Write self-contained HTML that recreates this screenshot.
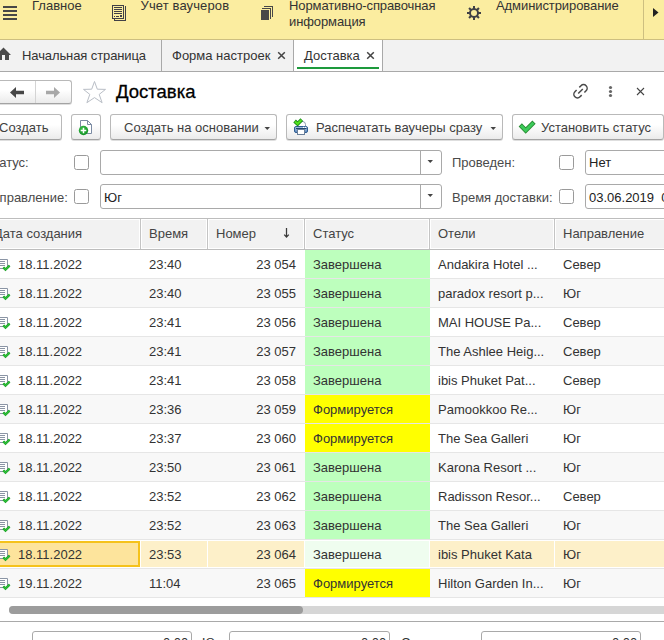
<!DOCTYPE html>
<html><head><meta charset="utf-8">
<style>
*{box-sizing:border-box;margin:0;padding:0}
html,body{width:664px;height:640px;overflow:hidden;background:#fff;font-family:"Liberation Sans",sans-serif;font-size:13px;color:#333}
.a{position:absolute;white-space:nowrap;line-height:16px}
svg{position:absolute;overflow:visible}
#top{position:absolute;left:0;top:0;width:664px;height:40px;background:#fbeda0;border-bottom:1px solid #cdbf80}
#tabs{position:absolute;left:0;top:40px;width:664px;height:32px;background:#f2f2f2;border-bottom:1px solid #a9a9a9}
.btn{position:absolute;top:114px;height:26px;border:1px solid #b9b9b9;border-bottom-color:#a3a3a3;border-radius:3px;background:linear-gradient(#fff 0%,#fff 40%,#ebebeb 100%);box-shadow:0 1px 0 rgba(0,0,0,0.13)}
.bt{position:absolute;white-space:nowrap;line-height:16px;top:120px;color:#404040}
.inp{position:absolute;height:25px;border:1px solid #a9a9a9;border-radius:3px;background:#fff}
.chk{position:absolute;width:15px;height:15px;border:1px solid #9a9a9a;border-radius:2.5px;background:#fff}
.lb{position:absolute;white-space:nowrap;line-height:16px;color:#4a4a4a}
#thead{position:absolute;left:0;top:218px;width:664px;height:32px;background:#c4c4c4;border-top:1px solid #bdbdbd;border-bottom:1px solid #bdbdbd}
.th{position:absolute;top:0;height:30px;border:1px solid #fff;background:#f2f2f2}
#thead .a{color:#444}
.row{position:absolute;left:0;width:664px;height:29px;border-bottom:1px solid #e6e6e6}
.c{position:absolute;top:7px;line-height:16px;white-space:nowrap;color:#333}
</style></head><body>

<div id="top">
  <svg style="left:0;top:0" width="664" height="40">
    <g fill="#474747"><rect x="3" y="6" width="14" height="2"/><rect x="3" y="10" width="14" height="2"/><rect x="3" y="14" width="14" height="2"/><rect x="3" y="18" width="14" height="2"/></g>
    <g fill="#404046">
      <path d="M112 5h12v14h-12zM113 6v12h10v-12z" fill-rule="evenodd"/>
      <path d="M124 6h2v15h-12v-2h1v1h10v-14h-1z"/>
      <rect x="114" y="7" width="8" height="1"/><rect x="114" y="9" width="8" height="1"/><rect x="114" y="11" width="8" height="1"/><rect x="114" y="13" width="8" height="1"/>
      <rect x="114" y="16" width="1" height="1"/><rect x="116" y="16" width="3" height="1"/><rect x="120" y="15" width="2" height="2"/>
    </g>
    <g fill="#474747">
      <rect x="261" y="10" width="8" height="10"/>
      <path d="M262 8h9v11h-1v-10h-8z"/>
      <path d="M264 6h9v11h-1v-10h-8z"/>
    </g>
    <g fill="#404046">
      <path d="M474 8a5 5 0 1 0 0.001 0zM474 10a3 3 0 1 1 -0.001 0z" fill-rule="evenodd"/>
      <rect x="473" y="6" width="2" height="14"/><rect x="467" y="12" width="14" height="2"/>
      <rect x="473" y="6" width="2" height="14" transform="rotate(45 474 13)"/><rect x="473" y="6" width="2" height="14" transform="rotate(-45 474 13)"/>
      <circle cx="474" cy="13" r="3" fill="#fbeda0"/>
    </g>
    <path d="M653 8L658.5 12.5L653 17Z" fill="#222"/>
  </svg>
  <div class="a" style="left:32px;top:-2px">Главное</div>
  <div class="a" style="left:140.5px;top:-2px;letter-spacing:0.12px">Учет ваучеров</div>
  <div class="a" style="left:289px;top:-2px;line-height:15.5px;letter-spacing:-0.1px">Нормативно-справочная<br>информация</div>
  <div class="a" style="left:496px;top:-2px;letter-spacing:-0.08px">Администрирование</div>
  <div style="position:absolute;left:643px;top:0;width:1px;height:39px;background:#cdbf80"></div>
</div>

<div id="tabs">
  <div style="position:absolute;left:161px;top:0;width:1px;height:31px;background:#a9a9a9"></div>
  <div style="position:absolute;left:293px;top:0;width:90px;height:31px;background:#fff;border-left:1px solid #a9a9a9;border-right:1px solid #a9a9a9"></div>
  <div style="position:absolute;left:297px;top:27px;width:82px;height:2px;background:#1d9a3c"></div>
  <svg style="left:0;top:0" width="664" height="32">
    <path d="M3.5 7.5L11 15H9V20H5V15H2V20H-4V15Z" fill="#4a4a4a"/>
    <path d="M278.2 12.2l6.6 6.6M284.8 12.2l-6.6 6.6" stroke="#444" stroke-width="1.5"/>
    <path d="M367.2 12.2l6.6 6.6M373.8 12.2l-6.6 6.6" stroke="#444" stroke-width="1.5"/>
  </svg>
  <div class="a" style="left:22px;top:8px;letter-spacing:-0.1px">Начальная страница</div>
  <div class="a" style="left:172px;top:8px">Форма настроек</div>
  <div class="a" style="left:304px;top:8px">Доставка</div>
</div>

<div class="btn" style="left:-10px;top:80px;width:82px;height:24px"></div>
<div style="position:absolute;left:35px;top:81px;width:1px;height:22px;background:#d4d4d4"></div>
<svg style="left:0;top:0" width="664" height="640">
  <path d="M10 92.5L16 87V90.8H24V94.2H16V98Z" fill="#474747"/>
  <path d="M60 92.5L54 87V90.8H46V94.2H54V98Z" fill="#a8a8a8"/>
  <path d="M94.5 81.5L97.3 89.2L105.5 89.4L99.2 94.4L102.1 102.7L94.5 97.6L86.9 102.7L89.8 94.4L83.5 89.4L91.7 89.2Z" fill="none" stroke="#b9bec6" stroke-width="1"/>
  <g transform="translate(580.5 91.25) rotate(-45)" fill="none" stroke="#4a4a4a" stroke-width="1.5">
    <path d="M1.9 -3.6H4.3A3.6 3.6 0 0 1 4.3 3.6H1.9"/>
    <path d="M-1.9 3.6H-4.3A3.6 3.6 0 0 1 -4.3 -3.6H-1.9"/>
    <path d="M-3.2 0H3.2"/>
  </g>
  <g fill="#666"><circle cx="610.5" cy="87.5" r="1.6"/><circle cx="610.5" cy="91.5" r="1.6"/><circle cx="610.5" cy="95.5" r="1.6"/></g>
  <path d="M637 88l7 7M644 88l-7 7" stroke="#444" stroke-width="1.1"/>
</svg>
<div class="a" style="left:116px;top:81px;font-size:18.5px;line-height:22px;color:#000;-webkit-text-stroke:0.3px #000">Доставка</div>

<div class="btn" style="left:-10px;width:72px"></div>
<div class="bt" style="left:-1px">Создать</div>
<div class="btn" style="left:71px;width:30px"></div>
<div class="btn" style="left:110px;width:167px"></div>
<div class="bt" style="left:124px">Создать на основании</div>
<div class="btn" style="left:286px;width:217px"></div>
<div class="bt" style="left:316px">Распечатать ваучеры сразу</div>
<div class="btn" style="left:512px;width:152px"></div>
<div class="bt" style="left:541px">Установить статус</div>
<svg style="left:0;top:0" width="664" height="640">
  <defs><linearGradient id="pg" x1="0" y1="0" x2="0" y2="1"><stop offset="0" stop-color="#a9c4e4"/><stop offset="1" stop-color="#5d88bb"/></linearGradient>
  <radialGradient id="gg" cx="0.4" cy="0.35" r="0.7"><stop offset="0" stop-color="#3cc04a"/><stop offset="1" stop-color="#0f8f22"/></radialGradient></defs>
  <path d="M264.5 127H270L267.25 130Z" fill="#444"/>
  <path d="M490.5 127H496L493.25 130Z" fill="#444"/>
  <!-- doc add icon -->
  <path d="M80.5 120.5H87.5L91.5 124.5V133.5H80.5Z" fill="#fff" stroke="#7b8ba3" stroke-width="1"/>
  <path d="M87.5 120.5V124.5H91.5" fill="none" stroke="#7b8ba3" stroke-width="1"/>
  <circle cx="83.5" cy="130.5" r="4.7" fill="url(#gg)"/>
  <path d="M83.5 127.7V133.3M80.7 130.5H86.3" stroke="#fff" stroke-width="1.5"/>
  <!-- printer icon -->
  <path d="M299.5 121.5H303Q305.5 122 305.5 124.5V127" fill="#fff" stroke="#8a98ad" stroke-width="1"/>
  <rect x="294.5" y="126.5" width="13" height="6" rx="1.5" fill="url(#pg)" stroke="#2f5e93" stroke-width="1"/>
  <path d="M296 128.5H306.5" stroke="#23466f" stroke-width="1"/>
  <rect x="303" y="126.8" width="1.2" height="1.2" fill="#fff"/><rect x="305" y="126.8" width="1.2" height="1.2" fill="#fff"/>
  <rect x="297.5" y="129.5" width="7" height="5" fill="#fff" stroke="#6b7f99" stroke-width="1"/>
  <path d="M294.6 121L297.6 123.8L301.8 119.6" fill="none" stroke="#1c8a1c" stroke-width="3.8"/>
  <path d="M295 121.4L297.6 123.8L301.4 120" fill="none" stroke="#52e21e" stroke-width="2"/>
  <!-- check icon -->
  <path d="M521.9 126.6L525.7 130.4L532.4 123.7" fill="none" stroke="#2a8c33" stroke-width="4.6" stroke-linecap="square"/>
  <path d="M521.9 126.6L525.7 130.4L532.4 123.7" fill="none" stroke="#3ccb5a" stroke-width="2.8" stroke-linecap="square"/>
</svg>

<div class="lb" style="left:-16px;top:155px">Статус:</div>
<div class="chk" style="left:74px;top:155px"></div>
<div class="inp" style="left:100px;top:150px;width:342px"></div>
<div style="position:absolute;left:420px;top:151px;width:1px;height:23px;background:#a9a9a9"></div>
<div class="lb" style="left:452px;top:155px">Проведен:</div>
<div class="chk" style="left:559px;top:155px"></div>
<div class="inp" style="left:585px;top:150px;width:100px"></div>
<div class="a" style="left:589px;top:155px;color:#222">Нет</div>

<div class="lb" style="left:-17px;top:190px">Направление:</div>
<div class="chk" style="left:74px;top:189px"></div>
<div class="inp" style="left:100px;top:184px;width:342px"></div>
<div style="position:absolute;left:420px;top:185px;width:1px;height:23px;background:#a9a9a9"></div>
<div class="a" style="left:104px;top:190px;color:#222">Юг</div>
<div class="lb" style="left:452px;top:190px">Время доставки:</div>
<div class="chk" style="left:559px;top:189px"></div>
<div class="inp" style="left:585px;top:184px;width:100px"></div>
<div class="a" style="left:589px;top:190px;color:#222">03.06.2019&nbsp; 00:00:00</div>
<svg style="left:0;top:0" width="664" height="640">
  <path d="M427.5 160H433L430.25 163Z" fill="#444"/>
  <path d="M427.5 194H433L430.25 197Z" fill="#444"/>
</svg>

<div id="thead">
<div class="th" style="left:-20px;width:160px"></div>
<div class="th" style="left:141px;width:66px"></div>
<div class="th" style="left:208px;width:96px"></div>
<div class="th" style="left:305px;width:124px"></div>
<div class="th" style="left:430px;width:124px"></div>
<div class="th" style="left:555px;width:145px"></div>
<div class="a" style="left:-6px;top:7px">Дата создания</div>
<div class="a" style="left:149px;top:7px">Время</div>
<div class="a" style="left:216px;top:7px">Номер</div>
<div class="a" style="left:313px;top:7px">Статус</div>
<div class="a" style="left:438px;top:7px">Отели</div>
<div class="a" style="left:563px;top:7px">Направление</div>
<svg style="left:0;top:0" width="664" height="32"><path d="M286.5 9V18.2M284.2 15.6L286.5 18L288.8 15.6" fill="none" stroke="#3a3a3a" stroke-width="1.25"/></svg>
</div>
<div class="row" style="top:250px;background:#fff">
<div style="position:absolute;left:305px;top:0;width:125px;height:28px;background:#bdffbd"></div>
<svg style="left:0;top:9px" width="12" height="14"><path d="M-4 0.5H7.5V9.5H-4Z" fill="#fff" stroke="#8b95a5" stroke-width="1"/><path d="M-3 2.5H5M-3 4.5H5M-3 6.5H5" stroke="#8b95a5" stroke-width="1"/><path d="M3.3 8.3L5.5 10.6L9.6 6.6" fill="none" stroke="#1c9a26" stroke-width="2.4"/><path d="M3.3 8.3L5.5 10.6L9.6 6.6" fill="none" stroke="#2fc43a" stroke-width="1.2"/></svg>
<div class="c" style="left:18px">18.11.2022</div>
<div class="c" style="left:149px">23:40</div>
<div class="c" style="right:368px">23 054</div>
<div class="c" style="left:313px">Завершена</div>
<div class="c" style="left:438px">Andakira Hotel ...</div>
<div class="c" style="left:563px">Север</div>
</div>
<div class="row" style="top:279px;background:#f8f8f8">
<div style="position:absolute;left:305px;top:0;width:125px;height:28px;background:#bdffbd"></div>
<svg style="left:0;top:9px" width="12" height="14"><path d="M-4 0.5H7.5V9.5H-4Z" fill="#fff" stroke="#8b95a5" stroke-width="1"/><path d="M-3 2.5H5M-3 4.5H5M-3 6.5H5" stroke="#8b95a5" stroke-width="1"/><path d="M3.3 8.3L5.5 10.6L9.6 6.6" fill="none" stroke="#1c9a26" stroke-width="2.4"/><path d="M3.3 8.3L5.5 10.6L9.6 6.6" fill="none" stroke="#2fc43a" stroke-width="1.2"/></svg>
<div class="c" style="left:18px">18.11.2022</div>
<div class="c" style="left:149px">23:40</div>
<div class="c" style="right:368px">23 055</div>
<div class="c" style="left:313px">Завершена</div>
<div class="c" style="left:438px">paradox resort p...</div>
<div class="c" style="left:563px">Юг</div>
</div>
<div class="row" style="top:308px;background:#fff">
<div style="position:absolute;left:305px;top:0;width:125px;height:28px;background:#bdffbd"></div>
<svg style="left:0;top:9px" width="12" height="14"><path d="M-4 0.5H7.5V9.5H-4Z" fill="#fff" stroke="#8b95a5" stroke-width="1"/><path d="M-3 2.5H5M-3 4.5H5M-3 6.5H5" stroke="#8b95a5" stroke-width="1"/><path d="M3.3 8.3L5.5 10.6L9.6 6.6" fill="none" stroke="#1c9a26" stroke-width="2.4"/><path d="M3.3 8.3L5.5 10.6L9.6 6.6" fill="none" stroke="#2fc43a" stroke-width="1.2"/></svg>
<div class="c" style="left:18px">18.11.2022</div>
<div class="c" style="left:149px">23:41</div>
<div class="c" style="right:368px">23 056</div>
<div class="c" style="left:313px">Завершена</div>
<div class="c" style="left:438px">MAI HOUSE Pa...</div>
<div class="c" style="left:563px">Север</div>
</div>
<div class="row" style="top:337px;background:#f8f8f8">
<div style="position:absolute;left:305px;top:0;width:125px;height:28px;background:#bdffbd"></div>
<svg style="left:0;top:9px" width="12" height="14"><path d="M-4 0.5H7.5V9.5H-4Z" fill="#fff" stroke="#8b95a5" stroke-width="1"/><path d="M-3 2.5H5M-3 4.5H5M-3 6.5H5" stroke="#8b95a5" stroke-width="1"/><path d="M3.3 8.3L5.5 10.6L9.6 6.6" fill="none" stroke="#1c9a26" stroke-width="2.4"/><path d="M3.3 8.3L5.5 10.6L9.6 6.6" fill="none" stroke="#2fc43a" stroke-width="1.2"/></svg>
<div class="c" style="left:18px">18.11.2022</div>
<div class="c" style="left:149px">23:41</div>
<div class="c" style="right:368px">23 057</div>
<div class="c" style="left:313px">Завершена</div>
<div class="c" style="left:438px">The Ashlee Heig...</div>
<div class="c" style="left:563px">Север</div>
</div>
<div class="row" style="top:366px;background:#fff">
<div style="position:absolute;left:305px;top:0;width:125px;height:28px;background:#bdffbd"></div>
<svg style="left:0;top:9px" width="12" height="14"><path d="M-4 0.5H7.5V9.5H-4Z" fill="#fff" stroke="#8b95a5" stroke-width="1"/><path d="M-3 2.5H5M-3 4.5H5M-3 6.5H5" stroke="#8b95a5" stroke-width="1"/><path d="M3.3 8.3L5.5 10.6L9.6 6.6" fill="none" stroke="#1c9a26" stroke-width="2.4"/><path d="M3.3 8.3L5.5 10.6L9.6 6.6" fill="none" stroke="#2fc43a" stroke-width="1.2"/></svg>
<div class="c" style="left:18px">18.11.2022</div>
<div class="c" style="left:149px">23:41</div>
<div class="c" style="right:368px">23 058</div>
<div class="c" style="left:313px">Завершена</div>
<div class="c" style="left:438px">ibis Phuket Pat...</div>
<div class="c" style="left:563px">Север</div>
</div>
<div class="row" style="top:395px;background:#f8f8f8">
<div style="position:absolute;left:305px;top:0;width:125px;height:28px;background:#ffff00"></div>
<svg style="left:0;top:9px" width="12" height="14"><path d="M-4 0.5H7.5V9.5H-4Z" fill="#fff" stroke="#8b95a5" stroke-width="1"/><path d="M-3 2.5H5M-3 4.5H5M-3 6.5H5" stroke="#8b95a5" stroke-width="1"/><path d="M3.3 8.3L5.5 10.6L9.6 6.6" fill="none" stroke="#1c9a26" stroke-width="2.4"/><path d="M3.3 8.3L5.5 10.6L9.6 6.6" fill="none" stroke="#2fc43a" stroke-width="1.2"/></svg>
<div class="c" style="left:18px">18.11.2022</div>
<div class="c" style="left:149px">23:36</div>
<div class="c" style="right:368px">23 059</div>
<div class="c" style="left:313px">Формируется</div>
<div class="c" style="left:438px">Pamookkoo Re...</div>
<div class="c" style="left:563px">Юг</div>
</div>
<div class="row" style="top:424px;background:#fff">
<div style="position:absolute;left:305px;top:0;width:125px;height:28px;background:#ffff00"></div>
<svg style="left:0;top:9px" width="12" height="14"><path d="M-4 0.5H7.5V9.5H-4Z" fill="#fff" stroke="#8b95a5" stroke-width="1"/><path d="M-3 2.5H5M-3 4.5H5M-3 6.5H5" stroke="#8b95a5" stroke-width="1"/><path d="M3.3 8.3L5.5 10.6L9.6 6.6" fill="none" stroke="#1c9a26" stroke-width="2.4"/><path d="M3.3 8.3L5.5 10.6L9.6 6.6" fill="none" stroke="#2fc43a" stroke-width="1.2"/></svg>
<div class="c" style="left:18px">18.11.2022</div>
<div class="c" style="left:149px">23:37</div>
<div class="c" style="right:368px">23 060</div>
<div class="c" style="left:313px">Формируется</div>
<div class="c" style="left:438px">The Sea Galleri</div>
<div class="c" style="left:563px">Юг</div>
</div>
<div class="row" style="top:453px;background:#f8f8f8">
<div style="position:absolute;left:305px;top:0;width:125px;height:28px;background:#bdffbd"></div>
<svg style="left:0;top:9px" width="12" height="14"><path d="M-4 0.5H7.5V9.5H-4Z" fill="#fff" stroke="#8b95a5" stroke-width="1"/><path d="M-3 2.5H5M-3 4.5H5M-3 6.5H5" stroke="#8b95a5" stroke-width="1"/><path d="M3.3 8.3L5.5 10.6L9.6 6.6" fill="none" stroke="#1c9a26" stroke-width="2.4"/><path d="M3.3 8.3L5.5 10.6L9.6 6.6" fill="none" stroke="#2fc43a" stroke-width="1.2"/></svg>
<div class="c" style="left:18px">18.11.2022</div>
<div class="c" style="left:149px">23:50</div>
<div class="c" style="right:368px">23 061</div>
<div class="c" style="left:313px">Завершена</div>
<div class="c" style="left:438px">Karona Resort ...</div>
<div class="c" style="left:563px">Юг</div>
</div>
<div class="row" style="top:482px;background:#fff">
<div style="position:absolute;left:305px;top:0;width:125px;height:28px;background:#bdffbd"></div>
<svg style="left:0;top:9px" width="12" height="14"><path d="M-4 0.5H7.5V9.5H-4Z" fill="#fff" stroke="#8b95a5" stroke-width="1"/><path d="M-3 2.5H5M-3 4.5H5M-3 6.5H5" stroke="#8b95a5" stroke-width="1"/><path d="M3.3 8.3L5.5 10.6L9.6 6.6" fill="none" stroke="#1c9a26" stroke-width="2.4"/><path d="M3.3 8.3L5.5 10.6L9.6 6.6" fill="none" stroke="#2fc43a" stroke-width="1.2"/></svg>
<div class="c" style="left:18px">18.11.2022</div>
<div class="c" style="left:149px">23:52</div>
<div class="c" style="right:368px">23 062</div>
<div class="c" style="left:313px">Завершена</div>
<div class="c" style="left:438px">Radisson Resor...</div>
<div class="c" style="left:563px">Север</div>
</div>
<div class="row" style="top:511px;background:#f8f8f8">
<div style="position:absolute;left:305px;top:0;width:125px;height:28px;background:#bdffbd"></div>
<svg style="left:0;top:9px" width="12" height="14"><path d="M-4 0.5H7.5V9.5H-4Z" fill="#fff" stroke="#8b95a5" stroke-width="1"/><path d="M-3 2.5H5M-3 4.5H5M-3 6.5H5" stroke="#8b95a5" stroke-width="1"/><path d="M3.3 8.3L5.5 10.6L9.6 6.6" fill="none" stroke="#1c9a26" stroke-width="2.4"/><path d="M3.3 8.3L5.5 10.6L9.6 6.6" fill="none" stroke="#2fc43a" stroke-width="1.2"/></svg>
<div class="c" style="left:18px">18.11.2022</div>
<div class="c" style="left:149px">23:52</div>
<div class="c" style="right:368px">23 063</div>
<div class="c" style="left:313px">Завершена</div>
<div class="c" style="left:438px">The Sea Galleri</div>
<div class="c" style="left:563px">Юг</div>
</div>
<div class="row" style="top:540px;background:#fff">
<div style="position:absolute;left:141px;top:1px;width:66px;height:26px;background:#fdf0c9"></div>
<div style="position:absolute;left:208px;top:1px;width:96px;height:26px;background:#fdf0c9"></div>
<div style="position:absolute;left:430px;top:1px;width:124px;height:26px;background:#fdf0c9"></div>
<div style="position:absolute;left:555px;top:1px;width:145px;height:26px;background:#fdf0c9"></div>
<div style="position:absolute;left:305px;top:1px;width:124px;height:26px;background:#effdef"></div>
<div style="position:absolute;left:-10px;top:1px;width:150px;height:26px;background:#fde49c;border:2px solid #f5c21b"></div>
<svg style="left:0;top:9px" width="12" height="14"><path d="M-4 0.5H7.5V9.5H-4Z" fill="#fff" stroke="#8b95a5" stroke-width="1"/><path d="M-3 2.5H5M-3 4.5H5M-3 6.5H5" stroke="#8b95a5" stroke-width="1"/><path d="M3.3 8.3L5.5 10.6L9.6 6.6" fill="none" stroke="#1c9a26" stroke-width="2.4"/><path d="M3.3 8.3L5.5 10.6L9.6 6.6" fill="none" stroke="#2fc43a" stroke-width="1.2"/></svg>
<div class="c" style="left:18px">18.11.2022</div>
<div class="c" style="left:149px">23:53</div>
<div class="c" style="right:368px">23 064</div>
<div class="c" style="left:313px">Завершена</div>
<div class="c" style="left:438px">ibis Phuket Kata</div>
<div class="c" style="left:563px">Юг</div>
</div>
<div class="row" style="top:569px;background:#f8f8f8">
<div style="position:absolute;left:305px;top:0;width:125px;height:28px;background:#ffff00"></div>
<svg style="left:0;top:9px" width="12" height="14"><path d="M-4 0.5H7.5V9.5H-4Z" fill="#fff" stroke="#8b95a5" stroke-width="1"/><path d="M-3 2.5H5M-3 4.5H5M-3 6.5H5" stroke="#8b95a5" stroke-width="1"/><path d="M3.3 8.3L5.5 10.6L9.6 6.6" fill="none" stroke="#1c9a26" stroke-width="2.4"/><path d="M3.3 8.3L5.5 10.6L9.6 6.6" fill="none" stroke="#2fc43a" stroke-width="1.2"/></svg>
<div class="c" style="left:18px">19.11.2022</div>
<div class="c" style="left:149px">11:04</div>
<div class="c" style="right:368px">23 065</div>
<div class="c" style="left:313px">Формируется</div>
<div class="c" style="left:438px">Hilton Garden In...</div>
<div class="c" style="left:563px">Юг</div>
</div>
<div style="position:absolute;left:9px;top:606px;width:700px;height:8px;border-radius:4px;background:#d6d6d6"></div>
<div style="position:absolute;left:9px;top:606px;width:294px;height:8px;border-radius:4px;background:#9c9c9c"></div>
<div style="position:absolute;left:0;top:621px;width:664px;height:1px;background:#a9a9a9"></div>
<div class="inp" style="left:32px;top:631px;width:160px;height:24px"></div>
<div class="a" style="left:163px;top:635px">0,00</div>
<div class="a" style="left:202px;top:635px">Ю</div>
<div class="inp" style="left:229px;top:631px;width:161px;height:24px"></div>
<div class="a" style="left:361px;top:635px">0,00</div>
<div class="a" style="left:401px;top:635px">С</div>
<div class="inp" style="left:481px;top:631px;width:160px;height:24px"></div>
<div class="a" style="left:612px;top:635px">0,00</div>
</body></html>
